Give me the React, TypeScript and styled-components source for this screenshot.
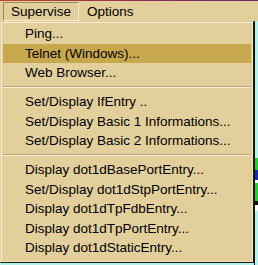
import styled, { createGlobalStyle } from 'styled-components'

const Global = createGlobalStyle`
  html, body {
    margin: 0;
    padding: 0;
    background: #b4f2ee;
    font-family: "Liberation Sans", Arial, sans-serif;
  }
`

const face = '#e2cf9c'
const hilite = '#c8a84c'

const Screen = styled.div`
  width: 258px;
  height: 265px;
  display: flex;
  flex-direction: column;
  overflow: hidden;
`

const TitleEdge = styled.div`
  height: 1px;
  background: linear-gradient(90deg, #c24a2c, #8a2c5c 60%, #6c2a6e);
`

const MenuBar = styled.div`
  height: 20px;
  background: ${face};
  display: flex;
  align-items: stretch;
  padding: 1px 0 0 3px;
  box-sizing: border-box;
`

const BarItem = styled.div<{ $pressed?: boolean }>`
  display: flex;
  align-items: center;
  padding: 0 7px 1px 7px;
  font-size: 13.5px;
  color: #000;
  border: 1px solid transparent;
  ${p => p.$pressed && `
    border-color: #9c8a5e #f6ecd0 #f6ecd0 #9c8a5e;
  `}
`

const Body = styled.div`
  flex: 1;
  display: flex;
  min-height: 0;
`

const Dropdown = styled.div`
  width: 254px;
  height: 242px;
  background: ${face};
  box-sizing: border-box;
  border-style: solid;
  border-width: 1px;
  border-color: ${face} #1c1c14 #1c1c14 ${face};
  box-shadow: inset 1px 1px 0 #f7edd2, inset -1px -1px 0 #efe2bc;
  padding: 2px;
  display: flex;
  flex-direction: column;
`

const Item = styled.div<{ $active?: boolean }>`
  height: 19.5px;
  flex: none;
  display: flex;
  align-items: center;
  padding-left: 22px;
  font-size: 13.5px;
  color: #000;
  white-space: nowrap;
  background: ${p => (p.$active ? hilite : 'transparent')};
`

const Separator = styled.div`
  height: 9.5px;
  flex: none;
  display: flex;
  flex-direction: column;
  justify-content: center;
  &::before {
    content: '';
    height: 1px;
    background: #b8a374;
  }
  &::after {
    content: '';
    height: 1px;
    background: #f7eed4;
  }
`

const Backdrop = styled.div`
  flex: 1;
  display: flex;
  flex-direction: column;
  border-left: 1px solid #101010;
  background: #b4f2ee;
`

const Chunk = styled.div<{ $h: number; $c: string }>`
  height: ${p => p.$h}px;
  background: ${p => p.$c};
  flex: none;
`

type Entry = { label: string; active?: boolean } | 'sep'

const entries: Entry[] = [
  { label: 'Ping...' },
  { label: 'Telnet (Windows)...', active: true },
  { label: 'Web Browser...' },
  'sep',
  { label: 'Set/Display IfEntry ..' },
  { label: 'Set/Display Basic 1 Informations...' },
  { label: 'Set/Display Basic 2 Informations...' },
  'sep',
  { label: 'Display dot1dBasePortEntry...' },
  { label: 'Set/Display dot1dStpPortEntry...' },
  { label: 'Display dot1dTpFdbEntry...' },
  { label: 'Display dot1dTpPortEntry...' },
  { label: 'Display dot1dStaticEntry...' },
]

export default function App() {
  return (
    <Screen>
      <Global />
      <TitleEdge />
      <MenuBar>
        <BarItem $pressed>Supervise</BarItem>
        <BarItem>Options</BarItem>
      </MenuBar>
      <Body>
        <Dropdown>
          {entries.map((e, i) =>
            e === 'sep' ? (
              <Separator key={i} />
            ) : (
              <Item key={i} $active={e.active}>
                {e.label}
              </Item>
            )
          )}
        </Dropdown>
        <Backdrop>
          <Chunk $h={137} $c="#b4f2ee" />
          <Chunk $h={12} $c="#22d030" />
          <Chunk $h={10} $c="#1a2ab0" />
          <Chunk $h={3} $c="#ffffff" />
          <Chunk $h={18} $c="#22d030" />
          <Chunk $h={4} $c="#101010" />
          <Chunk $h={6} $c="#ffffff" />
        </Backdrop>
      </Body>
    </Screen>
  )
}
